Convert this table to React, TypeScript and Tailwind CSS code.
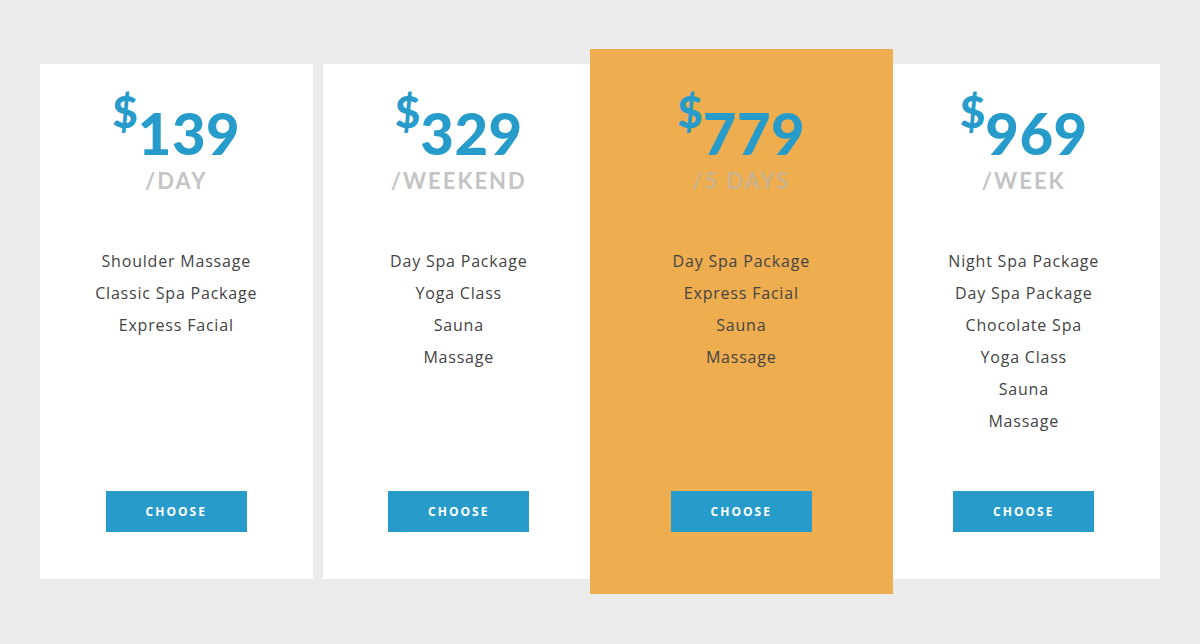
const plans = [
  { price: '139', per: '/DAY', items: ['Shoulder Massage', 'Classic Spa Package', 'Express Facial'] },
  { price: '329', per: '/WEEKEND', items: ['Day Spa Package', 'Yoga Class', 'Sauna', 'Massage'] },
  { price: '779', per: '/5 DAYS', items: ['Day Spa Package', 'Express Facial', 'Sauna', 'Massage'], featured: true },
  { price: '969', per: '/WEEK', items: ['Night Spa Package', 'Day Spa Package', 'Chocolate Spa', 'Yoga Class', 'Sauna', 'Massage'] },
];

export default function App() {
  return (
    <div className="min-h-[644px] w-[1200px] bg-[#ebebeb] px-[40px] pt-[64px] font-['Open_Sans',sans-serif]">
      <div className="grid grid-cols-4 gap-[10px]">
        {plans.map((p) => (
          <div
            key={p.price}
            className={
              p.featured
                ? 'relative z-10 -mx-[15px] -my-[15px] flex h-[545px] flex-col items-center bg-[#eead4f] pt-[43px] pb-[62px]'
                : 'flex h-[515px] flex-col items-center bg-white pt-[28px] pb-[47px]'
            }
          >
            {/* Price */}
            <div className="flex items-start font-['Lato',sans-serif] font-black text-[#279cca]">
              <span className="mt-[-6px] text-[44px] leading-[50px]">$</span>
              <span className="mt-[12px] text-[58px] leading-[58px] tracking-[0.5px]">{p.price}</span>
            </div>
            <div
              className={
                'mt-[6px] font-[\'Lato\',sans-serif] text-[22px] font-bold leading-[26px] tracking-[2px] ' +
                (p.featured ? 'text-[#c9b18b]' : 'text-[#c4c4c4]')
              }
            >
              {p.per}
            </div>

            {/* Features */}
            <ul className="mt-[51px] flex flex-col items-center text-[16px] leading-[32px] tracking-[0.8px] text-[#444]">
              {p.items.map((it) => (
                <li key={it}>{it}</li>
              ))}
            </ul>

            <button className="mt-auto h-[41px] w-[141px] bg-[#279cca] text-[12px] font-bold tracking-[2px] text-white">
              CHOOSE
            </button>
          </div>
        ))}
      </div>
    </div>
  );
}
